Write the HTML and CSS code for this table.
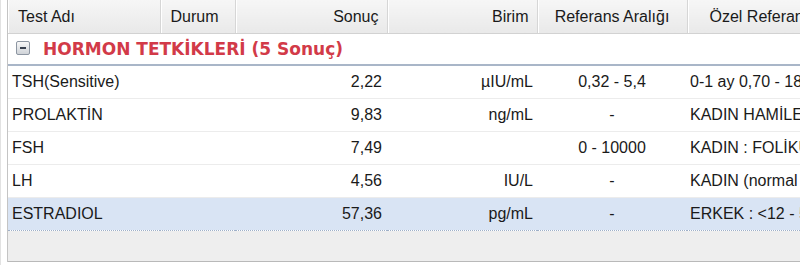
FILE: index.html
```html
<!DOCTYPE html>
<html lang="tr">
<head>
<meta charset="utf-8">
<link rel="stylesheet" href="styles.css">
</head>
<body>
<div class="frame">
  <div class="grid">
    <table class="results">
      <colgroup>
        <col class="c-name"><col class="c-status"><col class="c-value"><col class="c-unit"><col class="c-ref"><col class="c-special">
      </colgroup>
      <thead>
        <tr>
          <th class="left">Test Adı</th>
          <th class="left">Durum</th>
          <th class="right">Sonuç</th>
          <th class="right">Birim</th>
          <th class="center">Referans Aralığı</th>
          <th class="left special-h">Özel Referans Aralığı</th>
        </tr>
      </thead>
      <tbody>
        <tr class="group">
          <td colspan="6"><span class="toggle"><span class="minus"></span></span><span class="group-title">HORMON TETKİKLERİ (5 Sonuç)</span></td>
        </tr>
        <tr>
          <td>TSH(Sensitive)</td><td></td><td class="num">2,22</td><td class="unit">µIU/mL</td><td class="ref">0,32 - 5,4</td><td class="sp">0-1 ay 0,70 - 18</td>
        </tr>
        <tr>
          <td>PROLAKTİN</td><td></td><td class="num">9,83</td><td class="unit">ng/mL</td><td class="ref">-</td><td class="sp">KADIN HAMİLE</td>
        </tr>
        <tr>
          <td>FSH</td><td></td><td class="num">7,49</td><td class="unit"></td><td class="ref">0 - 10000</td><td class="sp">KADIN : FOLİKÜLER</td>
        </tr>
        <tr>
          <td>LH</td><td></td><td class="num">4,56</td><td class="unit">IU/L</td><td class="ref">-</td><td class="sp">KADIN (normal</td>
        </tr>
        <tr class="selected">
          <td>ESTRADIOL</td><td></td><td class="num">57,36</td><td class="unit">pg/mL</td><td class="ref">-</td><td class="sp">ERKEK : &lt;12 - 50</td>
        </tr>
      </tbody>
    </table>
    <div class="footer"></div>
  </div>
</div>
</body>
</html>
```

FILE: styles.css
```css
html, body {
  margin: 0;
  padding: 0;
  background: #ffffff;
}
body {
  font-family: "Liberation Sans", Arial, sans-serif;
  color: #1a1a1a;
  width: 800px;
  height: 265px;
  overflow: hidden;
}
.frame {
  padding-left: 6px;
  border-left: 1px solid #e2e2e2;
  height: 265px;
  box-sizing: border-box;
}
.grid {
  border-left: 1px solid #c4c4c4;
  width: 1000px;
}
.results {
  border-collapse: collapse;
  table-layout: fixed;
  width: 1000px;
  font-size: 16px;
}
.c-name { width: 152px; }
.c-status { width: 75px; }
.c-value { width: 152px; }
.c-unit { width: 150px; }
.c-ref { width: 150px; }
.c-special { width: 321px; }

thead th {
  height: 33px;
  padding: 1px 8px 0 10px;
  font-weight: normal;
  background: linear-gradient(#f6f6f6, #e9e9e9);
  border-right: 1px solid #d6d6d6;
  border-bottom: 1px solid #d2d2d2;
  box-shadow: inset 1px 0 0 #ffffff;
  white-space: nowrap;
  box-sizing: border-box;
  vertical-align: middle;
}
th.left { text-align: left; }
th.right { text-align: right; }
th.center { text-align: center; padding-left: 8px; }
th.special-h { padding-left: 22px; }

tbody td {
  height: 33px;
  padding: 1px 4px 0 4px;
  border-bottom: 1px solid #ececec;
  white-space: nowrap;
  overflow: hidden;
  box-sizing: border-box;
  vertical-align: middle;
}
td.num { text-align: right; padding-right: 5px; }
td.unit { text-align: right; padding-right: 4px; }
td.ref { text-align: center; }
td.sp { padding-left: 3px; }

tr.group td {
  height: 32px;
  padding-left: 8px;
  border-bottom: 2px solid #a9b6c8;
}
.toggle {
  display: inline-block;
  width: 12px;
  height: 12px;
  border: 1px solid #8d96a2;
  border-radius: 2px;
  background: linear-gradient(#f8f8f8, #cfd3d8);
  vertical-align: middle;
  position: relative;
  margin-right: 13px;
  top: -1px;
}
.minus {
  position: absolute;
  left: 3px;
  top: 5px;
  width: 6px;
  height: 2px;
  background: #3a4250;
}
.group-title {
  font-family: "DejaVu Sans", Verdana, sans-serif;
  font-weight: bold;
  font-size: 17px;
  color: #d23a48;
  vertical-align: middle;
}

tr.selected td {
  background: #d9e4f4;
  border-top: 1px dotted #b5c3d8;
  border-bottom: 1px dotted #9fb0c8;
}

.footer {
  height: 30px;
  background: #eeeeee;
  border-bottom: 1px solid #b9b9b9;
}
```
